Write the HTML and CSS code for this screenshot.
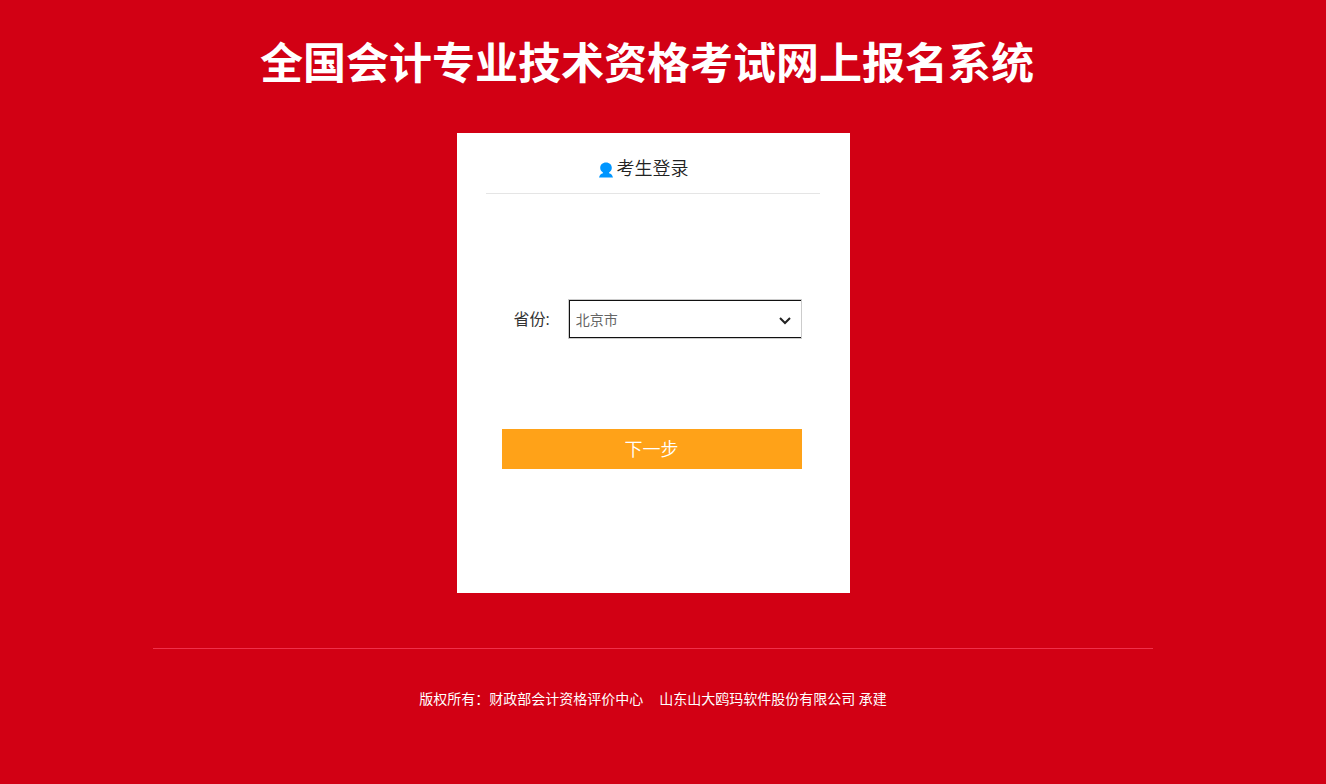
FILE: index.html
```html
<!DOCTYPE html>
<html lang="zh-CN">
<head>
<meta charset="UTF-8">
<meta name="viewport" content="width=device-width, initial-scale=1">
<title>全国会计专业技术资格考试网上报名系统</title>
<link rel="stylesheet" href="styles.css">
</head>
<body>

<div class="wrap">
  <h1 class="title">全国会计专业技术资格考试网上报名系统</h1>

  <form class="login">
    <h2 class="login-title">
      <svg class="user-icon" viewBox="0 0 14 16" width="14" height="16" aria-hidden="true">
        <path d="M7 0.500C3.500 0.500 1.200 2.800 1.200 5.800C1.200 7.800 2.200 9.300 4 10.500L3.600 11.500C2 11.800 .8 12.600 0 15.500H14C13.200 12.600 12 11.800 10.400 11.500L10 10.500C11.800 9.300 12.800 7.800 12.800 5.800C12.800 2.800 10.500 .5 7 .5Z" fill="#0096ff"/>
      </svg>
      <span>考生登录</span>
    </h2>

    <div class="field">
      <label for="province">省份:</label>
      <div class="select-box">
        <select id="province" name="province">
          <option>北京市</option>
        </select>
        <svg class="arrow" viewBox="0 0 12 8" width="12" height="8" aria-hidden="true">
          <path d="M1 1L6 6L11 1" fill="none" stroke="#222" stroke-width="2"/>
        </svg>
      </div>
    </div>

    <button class="next" type="button">下一步</button>
  </form>

  <footer class="footer">
    <span>版权所有：财政部会计资格评价中心</span>
    <span>山东山大鸥玛软件股份有限公司 承建</span>
  </footer>
</div>

</body>
</html>
```

FILE: styles.css
```css
* {
  box-sizing: border-box;
}
body {
  margin: 0;
  padding: 0 20px 0 0;
  background: #d20014;
  color: #333;
  font-family: "Open Sans", "Noto Sans CJK SC", sans-serif;
}
.wrap {
  max-width: 1000px;
  margin: 0 auto;
}
.title {
  margin: 0;
  padding: 33px 12px 40px 0;
  color: #fff;
  font-size: 43px;
  font-weight: 700;
  line-height: 60px;
  text-align: center;
}
.login {
  max-width: 393px;
  min-height: 460px;
  margin: 0 auto;
  padding: 20px 30px 40px 29px;
  background: #fff;
}
.login-title {
  display: flex;
  align-items: center;
  justify-content: center;
  gap: 4px;
  margin: 0;
  padding: 0 18px 10px 0;
  border-bottom: 1px solid #e5e5e5;
  color: #222;
  font-size: 18px;
  font-weight: 350;
  line-height: 30px;
}
.user-icon {
  margin-top: 4px;
}
.field {
  display: flex;
  align-items: center;
  gap: 18px;
  margin: 105px 18px 90px 28px;
}
.field label {
  font-size: 16px;
  line-height: 24px;
}
.select-box {
  position: relative;
  flex: 1;
  border: 1px solid #ccc;
}
.select-box select {
  display: block;
  width: 100%;
  height: 38px;
  padding: 0 30px 0 6px;
  border: solid #111;
  border-width: 1px 0 1px 1px;
  border-radius: 0;
  appearance: none;
  background: #fff;
  color: #666;
  font-family: inherit;
  font-size: 14px;
}
.arrow {
  position: absolute;
  top: 17px;
  right: 10px;
  pointer-events: none;
}
.next {
  display: block;
  width: 300px;
  height: 40px;
  margin: 0 0 0 16px;
  padding: 0 0 2px;
  border: 0;
  background: #ffa218;
  color: #fff;
  font-family: inherit;
  font-size: 18px;
  font-weight: 350;
  cursor: pointer;
}
.footer {
  display: flex;
  justify-content: center;
  gap: 16px;
  margin-top: 55px;
  padding: 40px 0;
  border-top: 1px solid #f0304a;
  color: #fff;
  font-size: 14px;
  line-height: 20px;
}
```
